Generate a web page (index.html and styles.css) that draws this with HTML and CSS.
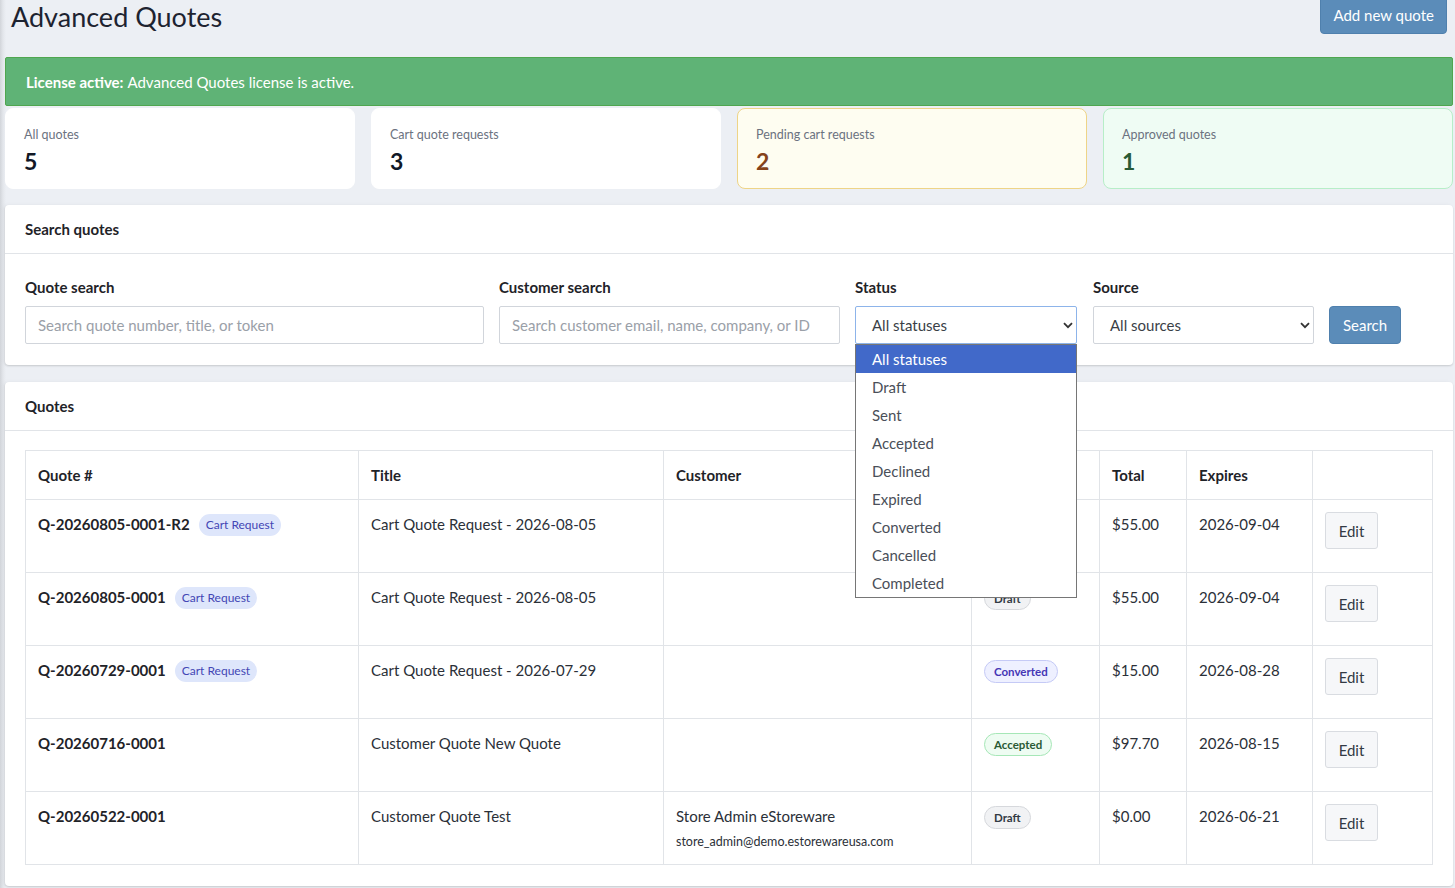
FILE: index.html
```html
<!DOCTYPE html>
<html lang="en">
<head>
<meta charset="utf-8">
<title>Advanced Quotes</title>
<link rel="stylesheet" href="styles.css">
</head>
<body>
<div class="page">
  <header class="topbar">
    <h1 class="title">Advanced Quotes</h1>
    <button class="btn btn-primary btn-add" type="button">Add new quote</button>
  </header>

  <div class="alert"><strong>License active:</strong> Advanced Quotes license is active.</div>

  <div class="stats">
    <div class="stat"><div class="stat-label">All quotes</div><div class="stat-value">5</div></div>
    <div class="stat"><div class="stat-label">Cart quote requests</div><div class="stat-value">3</div></div>
    <div class="stat stat-pending"><div class="stat-label">Pending cart requests</div><div class="stat-value">2</div></div>
    <div class="stat stat-approved"><div class="stat-label">Approved quotes</div><div class="stat-value">1</div></div>
  </div>

  <section class="panel">
    <div class="panel-head">Search quotes</div>
    <form class="panel-body search-form">
      <div class="field f-quote">
        <label class="field-label">Quote search</label>
        <input class="input" type="text" placeholder="Search quote number, title, or token">
      </div>
      <div class="field f-customer">
        <label class="field-label">Customer search</label>
        <input class="input" type="text" placeholder="Search customer email, name, company, or ID">
      </div>
      <div class="field f-status">
        <label class="field-label">Status</label>
        <div class="select-wrap">
          <div class="select select-focus">All statuses</div>
          <svg class="chev" width="10" height="7" viewBox="0 0 10 7"><path d="M1 1.2 5 5.2 9 1.2" fill="none" stroke="#333" stroke-width="1.8"/></svg>
          <ul class="dropdown">
            <li class="opt opt-selected">All statuses</li>
            <li class="opt">Draft</li>
            <li class="opt">Sent</li>
            <li class="opt">Accepted</li>
            <li class="opt">Declined</li>
            <li class="opt">Expired</li>
            <li class="opt">Converted</li>
            <li class="opt">Cancelled</li>
            <li class="opt">Completed</li>
          </ul>
        </div>
      </div>
      <div class="field f-source">
        <label class="field-label">Source</label>
        <div class="select-wrap">
          <div class="select">All sources</div>
          <svg class="chev" width="10" height="7" viewBox="0 0 10 7"><path d="M1 1.2 5 5.2 9 1.2" fill="none" stroke="#333" stroke-width="1.8"/></svg>
        </div>
      </div>
      <div class="field f-btn">
        <button class="btn btn-primary btn-search" type="button">Search</button>
      </div>
    </form>
  </section>

  <section class="panel panel-quotes">
    <div class="panel-head">Quotes</div>
    <div class="panel-body table-body">
      <table class="qtable">
        <colgroup>
          <col class="c-num"><col class="c-title"><col class="c-cust"><col class="c-status"><col class="c-total"><col class="c-exp"><col class="c-act">
        </colgroup>
        <thead>
          <tr><th>Quote #</th><th>Title</th><th>Customer</th><th>Status</th><th>Total</th><th>Expires</th><th></th></tr>
        </thead>
        <tbody>
          <tr>
            <td><span class="qnum">Q-20260805-0001-R2</span><span class="tag-cart">Cart Request</span></td>
            <td>Cart Quote Request - 2026-08-05</td>
            <td></td>
            <td><span class="badge badge-draft">Draft</span></td>
            <td>$55.00</td>
            <td>2026-09-04</td>
            <td><button class="btn btn-edit" type="button">Edit</button></td>
          </tr>
          <tr>
            <td><span class="qnum">Q-20260805-0001</span><span class="tag-cart">Cart Request</span></td>
            <td>Cart Quote Request - 2026-08-05</td>
            <td></td>
            <td><span class="badge badge-draft">Draft</span></td>
            <td>$55.00</td>
            <td>2026-09-04</td>
            <td><button class="btn btn-edit" type="button">Edit</button></td>
          </tr>
          <tr>
            <td><span class="qnum">Q-20260729-0001</span><span class="tag-cart">Cart Request</span></td>
            <td>Cart Quote Request - 2026-07-29</td>
            <td></td>
            <td><span class="badge badge-converted">Converted</span></td>
            <td>$15.00</td>
            <td>2026-08-28</td>
            <td><button class="btn btn-edit" type="button">Edit</button></td>
          </tr>
          <tr>
            <td><span class="qnum">Q-20260716-0001</span></td>
            <td>Customer Quote New Quote</td>
            <td></td>
            <td><span class="badge badge-accepted">Accepted</span></td>
            <td>$97.70</td>
            <td>2026-08-15</td>
            <td><button class="btn btn-edit" type="button">Edit</button></td>
          </tr>
          <tr>
            <td><span class="qnum">Q-20260522-0001</span></td>
            <td>Customer Quote Test</td>
            <td><div class="cust-name">Store Admin eStoreware</div><div class="cust-mail">store_admin@demo.estorewareusa.com</div></td>
            <td><span class="badge badge-draft">Draft</span></td>
            <td>$0.00</td>
            <td>2026-06-21</td>
            <td><button class="btn btn-edit" type="button">Edit</button></td>
          </tr>
        </tbody>
      </table>
    </div>
  </section>
</div>
</body>
</html>
```

FILE: styles.css
```css
* { box-sizing: border-box; }
html, body { margin: 0; padding: 0; }
body {
  font-family: Lato, "Liberation Sans", sans-serif;
  font-size: 15px;
  color: #24292f;
  background: linear-gradient(90deg, #d2d5da 0, #e3e6eb 3px, #eceff4 6px);
  min-height: 888px;
  overflow: hidden;
}
.page {
  padding: 0 2px 0 5px;
}
.topbar {
  display: flex;
  justify-content: space-between;
  align-items: flex-start;
  height: 57px;
}
.title {
  margin: 0 0 0 6px;
  font-size: 27px;
  font-weight: 400;
  line-height: 33px;
  color: #1d2330;
}
.btn {
  font-family: inherit;
  font-size: 15px;
  border-radius: 4px;
  cursor: pointer;
}
.btn-primary {
  background: #5b8cb9;
  color: #fff;
  border: 1px solid #4f80ad;
}
.btn-add {
  height: 38px;
  padding: 0 12px;
  margin: -4px 6px 0 0;
}
.alert {
  height: 49px;
  display: flex;
  align-items: center;
  padding: 0 20px;
  background: #5fb376;
  border: 1px solid #4fa64f;
  border-radius: 2px;
  color: #fff;
  font-size: 15px;
}
.alert strong { font-weight: 700; margin-right: 4px; }
.stats {
  display: grid;
  grid-template-columns: repeat(4, 1fr);
  gap: 16px;
  margin-top: 2px;
}
.stat {
  height: 81px;
  background: #fff;
  border: 1px solid #fff;
  border-radius: 8px;
  padding: 17px 18px 0;
}
.stat-label {
  font-size: 12.5px;
  color: #6b7280;
  line-height: 18px;
}
.stat-value {
  font-size: 23px;
  font-weight: 700;
  line-height: 30px;
  margin-top: 2px;
  color: #111827;
}
.stat-pending { background: #fefdf1; border-color: #eed487; }
.stat-pending .stat-value { color: #85431b; }
.stat-approved { background: #effcf4; border-color: #b7eec8; }
.stat-approved .stat-value { color: #285a34; }

.panel {
  background: #fff;
  border-radius: 4px;
  box-shadow: 0 1px 2px rgba(0,0,0,0.14), -2px 0 4px rgba(0,0,0,0.04);
  margin-top: 16px;
}
.panel-quotes { margin-top: 17px; }
.panel-head {
  height: 49px;
  padding: 0 20px;
  display: flex;
  align-items: center;
  font-weight: 700;
  font-size: 15px;
  border-bottom: 1px solid #e1e4e8;
  color: #1f2328;
}
.panel-body { padding: 20px 21px 21px 20px; }
.table-body { padding-top: 19px; }
.search-form {
  display: flex;
  align-items: flex-end;
  gap: 15px;
  padding-top: 22px;
}
.field { display: flex; flex-direction: column; }
.field-label {
  font-weight: 700;
  font-size: 15px;
  line-height: 22px;
  margin-bottom: 8px;
  color: #1f2328;
}
.f-quote { width: 459px; }
.f-customer { width: 341px; }
.f-status { width: 222px; }
.f-source { width: 221px; margin-left: 1px; }
.f-btn { margin-left: 0; }
.input, .select {
  height: 38px;
  border: 1px solid #d1d5db;
  border-radius: 2px;
  font-family: inherit;
  font-size: 15px;
  padding: 0 12px;
  color: #3a3f47;
  background: #fff;
  outline: none;
}
.input::placeholder { color: #9aa0a8; }
.select {
  display: flex;
  align-items: center;
  padding-left: 16px;
}
.select-focus { border-color: #8db4ea; }
.select-wrap { position: relative; }
.chev {
  position: absolute;
  right: 4px;
  top: 16px;
}
.dropdown {
  position: absolute;
  left: 0;
  top: 38px;
  width: 222px;
  margin: 0;
  padding: 0;
  list-style: none;
  background: #fff;
  border: 1px solid #767676;
  z-index: 10;
}
.opt {
  height: 28px;
  line-height: 28px;
  padding-left: 16px;
  font-size: 15px;
  color: #4a4f59;
}
.opt-selected { background: #4169c9; color: #fff; }
.btn-search {
  height: 38px;
  width: 72px;
  padding: 0;
}

.qtable {
  width: 100%;
  border-collapse: collapse;
  table-layout: fixed;
}
.c-num { width: 333px; }
.c-title { width: 305px; }
.c-cust { width: 308px; }
.c-status { width: 128px; }
.c-total { width: 87px; }
.c-exp { width: 126px; }
.c-act { width: 120px; }
.qtable th, .qtable td {
  border: 1px solid #e1e4e8;
  text-align: left;
  vertical-align: top;
  padding: 13px 12px;
  line-height: 22px;
}
.qtable th {
  height: 49px;
  font-weight: 700;
  vertical-align: middle;
  padding-top: 12px;
  padding-bottom: 12px;
  color: #1f2328;
}
.qtable tbody tr { height: 73px; }
.qtable td { color: #2b3038; }
.qnum { font-weight: 700; color: #1f2328; }
.tag-cart {
  display: inline-block;
  margin-left: 9px;
  padding: 0 7px;
  height: 22px;
  line-height: 22px;
  border-radius: 11px;
  background: #dee6fb;
  color: #4346b5;
  font-size: 12px;
  vertical-align: 1px;
}
.badge {
  display: inline-block;
  margin-top: 1px;
  padding: 0 9px;
  height: 23px;
  line-height: 21px;
  border-radius: 12px;
  border: 1px solid;
  font-size: 11.5px;
  font-weight: 700;
}
.badge-draft { background: #f1f2f4; border-color: #d6d8dc; color: #333a44; }
.badge-converted { background: #eef0ff; border-color: #c5caf6; color: #4537b5; }
.badge-accepted { background: #eefcf2; border-color: #a6e7b7; color: #2a5a35; }
.btn-edit {
  width: 53px;
  height: 37px;
  margin-top: -1px;
  background: #f6f7f9;
  border: 1px solid #d9dce1;
  border-radius: 3px;
  color: #333a44;
  padding: 0;
}
.cust-name { line-height: 22px; }
.cust-mail { font-size: 12.5px; line-height: 18px; margin-top: 6px; }
```
